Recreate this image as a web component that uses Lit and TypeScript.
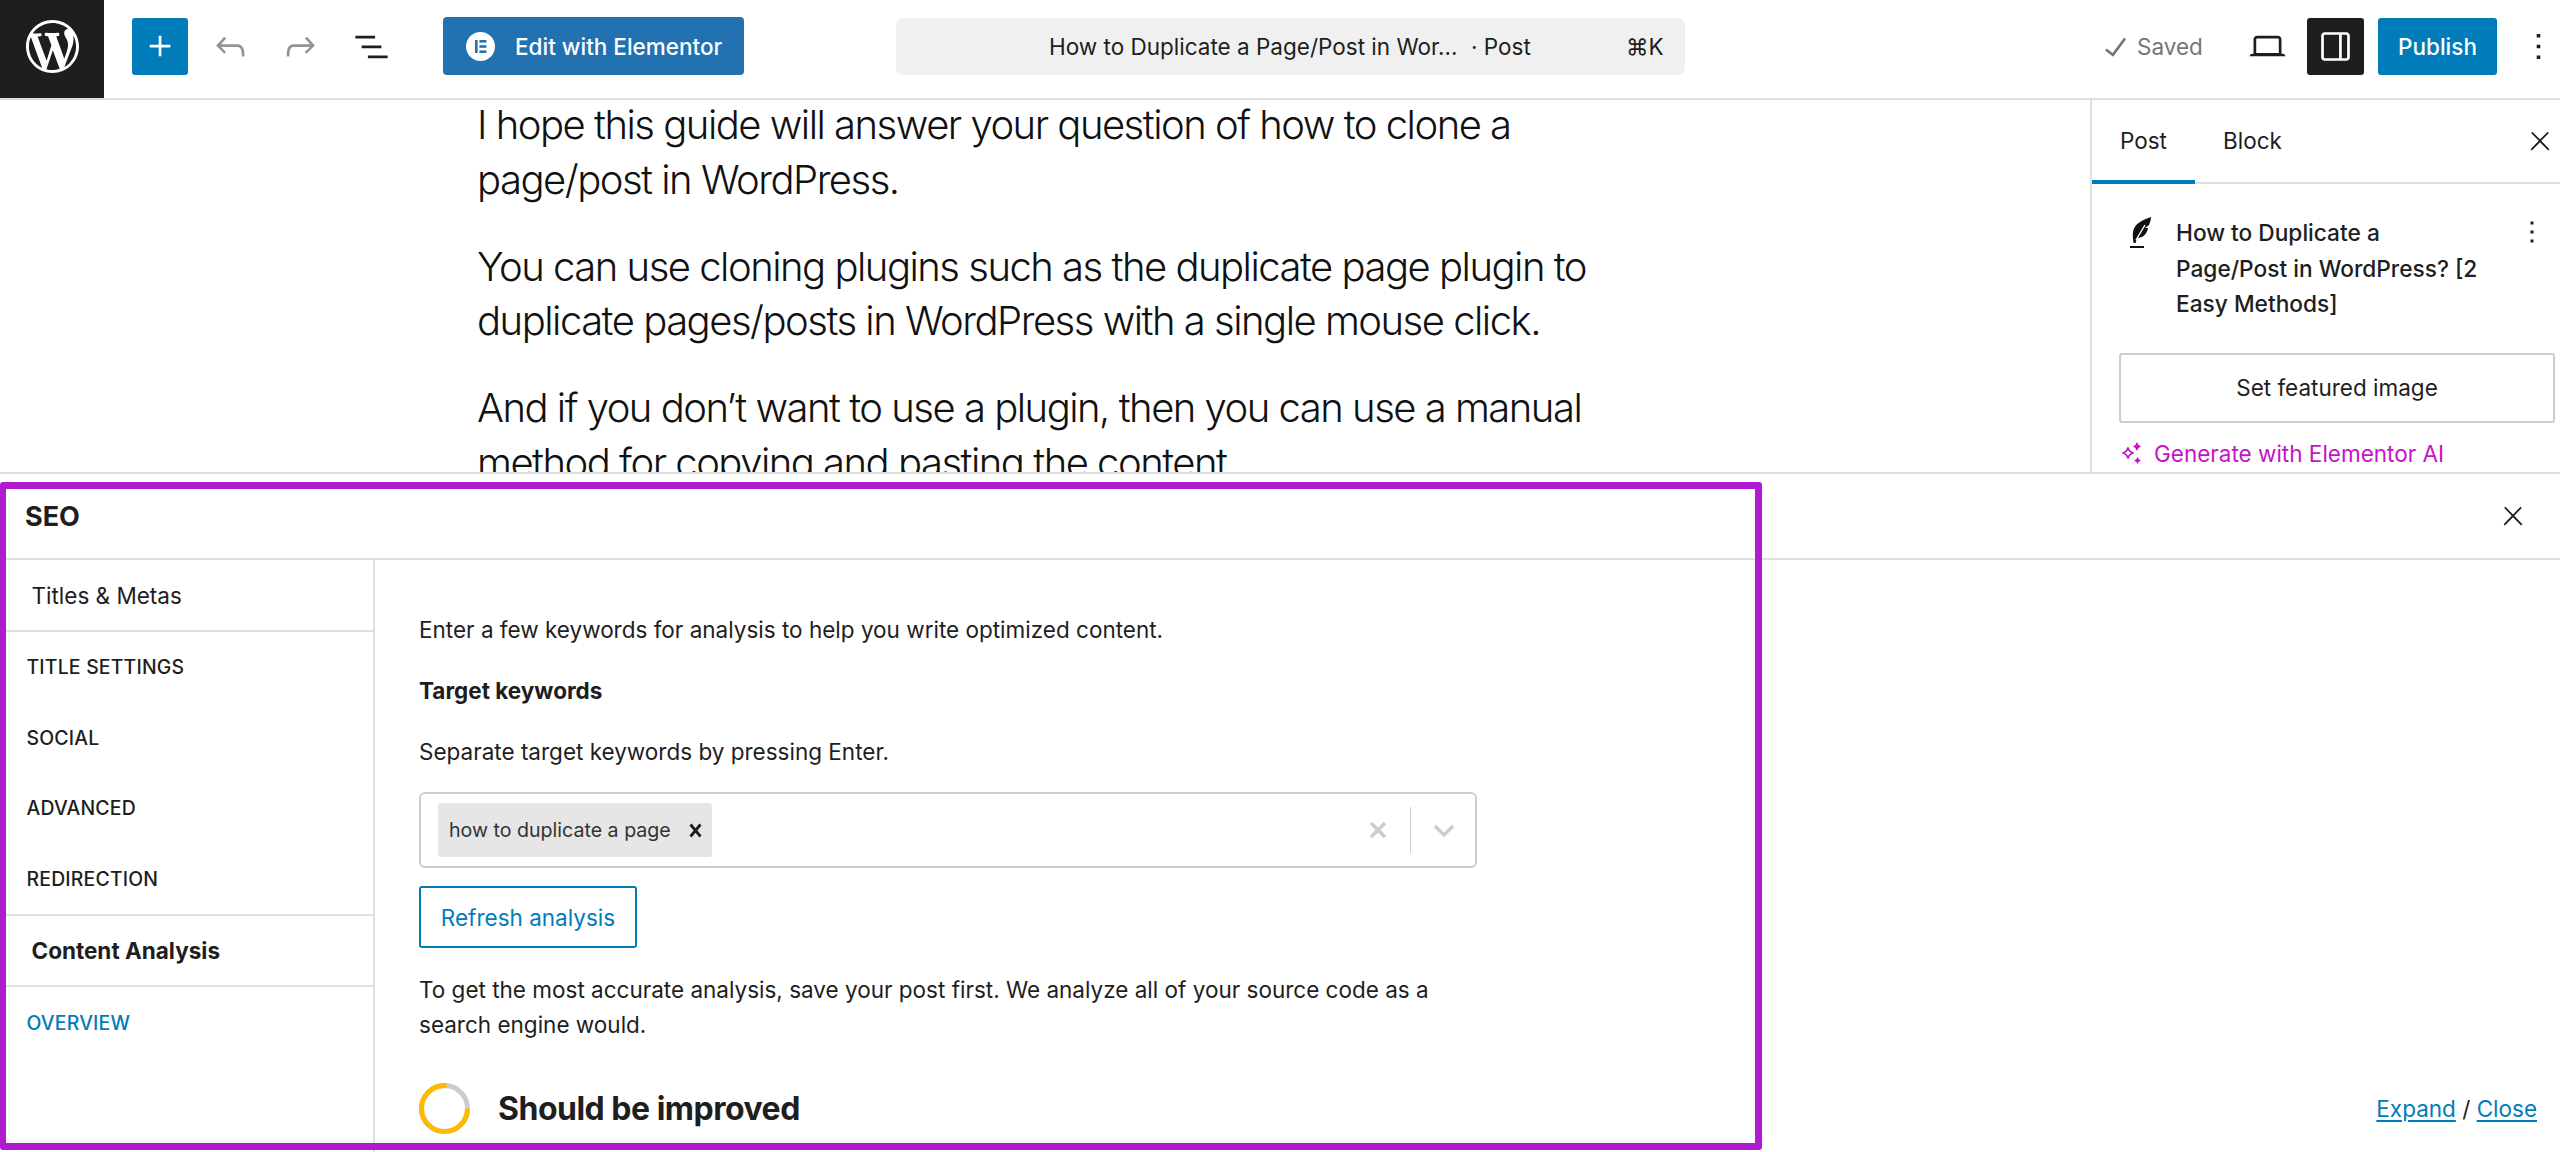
import { LitElement, html, css, svg } from "lit";
import { customElement } from "lit/decorators.js";

const icon = (d: string, size = 43) => html`<svg class="ic" width=${size} height=${size} viewBox="0 0 24 24" fill="currentColor">${svg`<path d=${d}></path>`}</svg>`;
const P = {
  plus: "M11 12.5V17.5H12.5V12.5H17.5V11H12.5V6H11V11H6V12.5H11Z",
  undo: "M18.3 11.7c-.6-.6-1.4-.9-2.3-.9H6.7l2.9-3.3-1.1-1-4.5 5L8.5 16l1-1-2.7-2.7H16c.5 0 .9.2 1.3.5 1 1 1 3.4 1 4.5v.3h1.5v-.2c0-1.5 0-4.3-1.5-5.7z",
  redo: "M15.6 6.5l-1.1 1 2.9 3.3H8c-.9 0-1.7.3-2.3.9-1.4 1.5-1.4 4.2-1.4 5.7v.2h1.5v-.3c0-1.1 0-3.5 1-4.5.3-.3.7-.5 1.3-.5h9.2L14.3 15l1.1 1.1 4.6-4.6-4.4-5z",
  list: "M3 6h11v1.5H3V6zm3.5 5.5h11V13h-11v-1.5zM21 17H10v1.5h11V17z",
  check: "M16.7 7.1l-6.3 8.5-3.3-2.5-.9 1.2 4.5 3.4L17.9 8z",
  laptop: "M20.5 16h-.7V8c0-1.1-.9-2-2-2H6.2c-1.1 0-2 .9-2 2v8h-.7c-.8 0-1.5.7-1.5 1.5h20c0-.8-.7-1.5-1.5-1.5zM5.7 8c0-.3.2-.5.5-.5h11.6c.3 0 .5.2.5.5v7.6H5.7V8z",
  drawer: "M18 4H6c-1.1 0-2 .9-2 2v12c0 1.1.9 2 2 2h12c1.1 0 2-.9 2-2V6c0-1.1-.9-2-2-2zm-4 14.5H6c-.3 0-.5-.2-.5-.5V6c0-.3.2-.5.5-.5h8v13zm4.5-.5c0 .3-.2.5-.5.5h-2.500v-13H18c.3 0 .5.2.5.5v12z",
  more: "M13 19h-2v-2h2v2zm0-6h-2v-2h2v2zm0-6h-2V5h2v2z",
  close: "M13 11.8l6.1-6.3-1-1-6.1 6.2-6.1-6.2-1 1 6.1 6.3-6.5 6.7 1 1 6.5-6.6 6.5 6.6 1-1z",
};

@customElement("app-root")
export class AppRoot extends LitElement {
  static styles = css`
    :host { display: block; position: relative; width: 2560px; height: 1152px; overflow: hidden; background: #fff; color: #1e1e1e; font-family: Inter, "Liberation Sans", sans-serif; font-size: 22.5px; }
    * { box-sizing: border-box; }
    .ic { display: block; flex: none; }
    .page { display: flex; flex-direction: column; height: 100%; }

    .top { display: grid; grid-template-columns: 896px 789px 1fr; align-items: center; height: 100px; flex: none; border-bottom: 2px solid #e0e0e0; }
    .left { display: flex; align-items: center; height: 98px; }
    .left > * { margin-bottom: 6px; }
    .left > .logo { margin-bottom: 0; padding-bottom: 6px; }
    .logo { width: 104px; height: 98px; background: #1e1e1e; color: #fff; display: flex; align-items: center; justify-content: center; }
    .add { width: 56px; height: 57px; margin-left: 28px; border-radius: 3px; background: #007cba; color: #fff; display: flex; align-items: center; justify-content: center; }
    .undo { margin-left: 21px; color: #949494; }
    .redo { margin-left: 27px; color: #949494; }
    .listv { margin-left: 28px; }
    .elem { display: flex; align-items: center; margin-left: 50px; width: 301px; height: 58px; background: #2271b1; border-radius: 4px; color: #fff; padding-left: 23px; gap: 20px; font-weight: 500; }
    .elem svg { flex: none; }
    .cmd { height: 57px; margin-bottom: 6px; border-radius: 7px; background: #f0f0f0; display: flex; align-items: center; padding-left: 153px; }
    .cmd .t { width: 405px; white-space: nowrap; }
    .cmd .k { margin-left: 17px; width: 155px; white-space: nowrap; }
    .saved { display: flex; align-items: center; color: #757575; margin-left: 420px; width: 141px; }
    .saved .ic { margin: 0 0 0 -11px; }
    .tog { width: 57px; height: 57px; margin-left: 18px; background: #1e1e1e; color: #fff; border-radius: 3px; display: flex; align-items: center; justify-content: center; }
    .pub { width: 119px; height: 57px; margin-left: 14px; background: #007cba; color: #fff; border-radius: 3px; display: flex; align-items: center; justify-content: center; font-weight: 500; }
    .dots { margin: 0 -1px 0 20px; }
    .rightwrap { display: flex; align-items: center; margin-bottom: 6px; }

    .upper { height: 372px; flex: none; display: flex; overflow: hidden; }
    .post { flex: 1; padding: 0 0 0 477px; overflow: hidden; font-size: 40px; font-weight: 300; line-height: 54.5px; letter-spacing: -1.5px; color: #111; }
    .post p { margin: -2px 0 32.5px; width: 1120px; white-space: nowrap; }
    .post p + p { margin-top: 0; }
    .side { width: 470px; flex: none; border-left: 2px solid #e0e0e0; }
    .tabs { display: flex; height: 84px; border-bottom: 2px solid #e0e0e0; align-items: center; position: relative; }
    .tab { height: 84px; display: flex; align-items: center; }
    .tab.on { width: 103px; padding-left: 28px; border-bottom: 4px solid #007cba; margin-bottom: -2px; }
    .tab.off { margin-left: 28px; padding-bottom: 2px; }
    .tabs .ic { margin-left: auto; margin-right: 5px; }
    .sum { display: flex; padding: 31px 0 0 38px; position: relative; }
    .sum .tt { margin-left: 24px; width: 310px; line-height: 35.6px; font-weight: 500; font-size: 22.7px; }
    .sum .feather { margin-top: 2px; flex: none; }
    .sum .ic { margin: -1px 0 0 28px; }
    .feat { margin: 31px 5px 0 27px; height: 70px; border: 2px solid #ccc; border-radius: 3px; display: flex; align-items: center; justify-content: center; }
    .gen { display: flex; align-items: center; gap: 12px; margin: 17px 0 0 28px; color: #c513c5; }

    .panel { flex: 1; display: flex; flex-direction: column; min-height: 0; border-top: 2px solid #e0e0e0; }
    .phead { height: 86px; flex: none; border-bottom: 2px solid #e0e0e0; display: flex; align-items: center; justify-content: space-between; padding: 0 32px 0 25px; font-size: 27px; font-weight: 700; }
    .pbody { flex: 1; display: flex; min-height: 0; }
    .nav { width: 375px; flex: none; border-right: 2px solid #e0e0e0; }
    .nh { height: 72px; display: flex; align-items: center; padding-left: 31.5px; border-bottom: 2px solid #e0e0e0; }
    .nh.b { font-weight: 700; border-top: 2px solid #e0e0e0; height: 73px; }
    .ni { height: 70.5px; display: flex; align-items: center; padding-left: 26.5px; font-size: 19.4px; font-weight: 500; letter-spacing: 0.2px; }
    .ni.on { color: #007cba; height: 72px; }
    .main { flex: 1; padding: 52px 0 0 44px; }
    .main p { margin: 0 0 26px; line-height: 35px; width: 1060px; }
    .main p.b { font-weight: 700; }
    .sel { width: 1058px; height: 76px; margin-top: -3px; border: 2px solid #ccc; border-radius: 6px; display: flex; align-items: center; padding-left: 17px; }
    .tag { height: 54px; width: 274px; flex: none; background: #e6e6e6; border-radius: 3px; display: flex; align-items: center; padding-left: 11px; font-size: 19.6px; color: #333; white-space: nowrap; }
    .tag svg { margin-left: 18px; flex: none; }
    .clr { margin-left: auto; }
    .div { width: 1.5px; height: 46px; background: #ccc; margin: 0 22px 0 23px; }
    .sel .chev { margin-right: 20px; }
    .ref { width: 218px; height: 62px; margin-top: 18px; border: 2px solid #007cba; border-radius: 3px; color: #007cba; display: flex; align-items: center; justify-content: center; }
    .main p.note { margin: 23.5px 0 41.5px; }
    .score { display: flex; align-items: center; gap: 28px; font-size: 32px; font-weight: 700; letter-spacing: -0.5px; }
    .links { align-self: flex-end; padding: 0 23px 28px 0; white-space: nowrap; line-height: 30px; }
    .links a { color: #007cba; text-decoration: underline; text-underline-offset: 3px; }

    .mark { position: absolute; left: 0; top: 482px; width: 1762px; height: 668px; border: 7px solid #ae1bd1; border-left-width: 6px; border-radius: 3px; pointer-events: none; }
  `;

  render() {
    return html`
      <div class="page">
        <header class="top">
          <div class="left">
            <div class="logo"><svg width="53" height="53" viewBox="0 0 20 20" fill="currentColor"><path d="M20 10c0-5.51-4.49-10-10-10C4.48 0 0 4.49 0 10c0 5.52 4.48 10 10 10 5.51 0 10-4.48 10-10zM7.78 15.37L4.37 6.22c.55-.02 1.17-.08 1.17-.08.5-.06.44-1.13-.06-1.11 0 0-1.45.11-2.37.11-.18 0-.37 0-.58-.01C4.12 2.69 6.87 1.11 10 1.11c2.33 0 4.45.87 6.05 2.34-.68-.11-1.65.39-1.65 1.58 0 .74.45 1.36.9 2.1.35.61.55 1.36.55 2.46 0 1.49-1.4 5-1.4 5l-3.03-8.37c.54-.02.82-.17.82-.17.5-.05.44-1.25-.06-1.22 0 0-1.44.12-2.38.12-.87 0-2.33-.12-2.33-.12-.5-.03-.56 1.2-.06 1.22l.92.08 1.26 3.41zM17.41 10c.24-.64.74-1.87.43-4.25.7 1.29 1.05 2.71 1.05 4.25 0 3.29-1.73 6.24-4.4 7.78.97-2.59 1.94-5.2 2.92-7.78zM6.1 18.09C3.12 16.65 1.11 13.53 1.11 10c0-1.3.23-2.48.72-3.59C3.25 10.3 4.67 14.2 6.1 18.09zm4.03-6.63l2.58 6.98c-.86.29-1.76.45-2.71.45-.79 0-1.57-.11-2.29-.33.81-2.38 1.62-4.74 2.42-7.1z"></path></svg></div>
            <div class="add">${icon(P.plus)}</div>
            <div class="undo">${icon(P.undo)}</div>
            <div class="redo">${icon(P.redo)}</div>
            <div class="listv">${icon(P.list)}</div>
            <div class="elem">
              <svg width="29" height="29" viewBox="0 0 29 29"><circle cx="14.5" cy="14.5" r="14.5" fill="#fff"></circle><g fill="#2271b1"><rect x="9" y="8" width="2.6" height="13"></rect><rect x="13.4" y="8" width="7" height="2.6"></rect><rect x="13.4" y="13.2" width="7" height="2.6"></rect><rect x="13.4" y="18.4" width="7" height="2.6"></rect></g></svg>
              <span>Edit with Elementor</span>
            </div>
          </div>
          <div class="cmd"><span class="t">How to Duplicate a Page/Post in Wor...</span><span class="k">· Post</span><span>⌘K</span></div>
          <div class="rightwrap">
            <div class="saved">${icon(P.check)}<span>Saved</span></div>
            <div>${icon(P.laptop)}</div>
            <div class="tog">${icon(P.drawer)}</div>
            <div class="pub">Publish</div>
            <div class="dots">${icon(P.more)}</div>
          </div>
        </header>

        <div class="upper">
          <div class="post">
            <p>I hope this guide will answer your question of how to clone a<br>page/post in WordPress.</p>
            <p>You can use cloning plugins such as the duplicate page plugin to<br>duplicate pages/posts in WordPress with a single mouse click.</p>
            <p>And if you don’t want to use a plugin, then you can use a manual<br>method for copying and pasting the content</p>
          </div>
          <aside class="side">
            <div class="tabs">
              <div class="tab on">Post</div>
              <div class="tab off">Block</div>
              ${icon(P.close, 30)}
            </div>
            <div class="sum">
              <svg class="feather" width="22" height="32" viewBox="0 0 22 32"><path d="M21 0C12 3 4 7 3 15c-.4 4 0 7 .5 11h2L7 21c6 0 10-4 11-10l-3 0 4-3c1-3 2-5 2-8z" fill="#111"></path><path d="M6 23L15 8" stroke="#fff" stroke-width="1.4" fill="none"></path><rect x="0" y="29" width="14" height="2" fill="#111"></rect></svg>
              <div class="tt">How to Duplicate a Page/Post in WordPress? [2 Easy Methods]</div>
              ${icon(P.more, 36)}
            </div>
            <div class="feat">Set featured image</div>
            <div class="gen">
              <svg width="22" height="22" viewBox="0 0 22 22"><path d="M8 5.500C8.700 9 10 10.300 13.500 11 10 11.700 8.700 13 8 16.500 7.300 13 6 11.700 2.500 11 6 10.300 7.300 9 8 5.500z" fill="none" stroke="#c513c5" stroke-width="1.6"></path><path d="M17 0l1.600 2.900L21 4.500l-2.400 1.600L17 9l-1.600-2.900L13 4.500l2.400-1.600zM17.500 15l1.300 2.200 2.200 1.300-2.200 1.300-1.300 2.200-1.300-2.200-2.200-1.300 2.200-1.300z" fill="#c513c5"></path></svg>
              <span>Generate with Elementor AI</span>
            </div>
          </aside>
        </div>

        <section class="panel">
          <div class="phead"><span>SEO</span>${icon(P.close, 30)}</div>
          <div class="pbody">
            <nav class="nav">
              <div class="nh">Titles &amp; Metas</div>
              <div class="ni">TITLE SETTINGS</div>
              <div class="ni">SOCIAL</div>
              <div class="ni">ADVANCED</div>
              <div class="ni">REDIRECTION</div>
              <div class="nh b">Content Analysis</div>
              <div class="ni on">OVERVIEW</div>
            </nav>
            <div class="main">
              <p>Enter a few keywords for analysis to help you write optimized content.</p>
              <p class="b">Target keywords</p>
              <p>Separate target keywords by pressing Enter.</p>
              <div class="sel">
                <div class="tag"><span>how to duplicate a page</span>
                  <svg width="13" height="15" viewBox="0 0 13 15"><path d="M1.500 1.500l10 12M11.500 1.500l-10 12" stroke="#1e1e1e" stroke-width="2.800"></path></svg>
                </div>
                <svg class="clr" width="18" height="18" viewBox="0 0 18 18"><path d="M2 2l14 14M16 2L2 16" stroke="#ccc" stroke-width="3.600"></path></svg>
                <div class="div"></div>
                <svg class="chev" width="22" height="13" viewBox="0 0 22 13"><path d="M2 2l9 9 9-9" fill="none" stroke="#ccc" stroke-width="3.200"></path></svg>
              </div>
              <div class="ref">Refresh analysis</div>
              <p class="note">To get the most accurate analysis, save your post first. We analyze all of your source code as a search engine would.</p>
              <div class="score">
                <svg width="51" height="51" viewBox="0 0 51 51"><circle cx="25.500" cy="25.500" r="23" fill="none" stroke="#ccc" stroke-width="5"></circle><circle cx="25.500" cy="25.500" r="23" fill="none" stroke="#ffb900" stroke-width="5" stroke-dasharray="110 144.500"></circle></svg>
                <span>Should be improved</span>
              </div>
            </div>
            <div class="links"><a>Expand</a> / <a>Close</a></div>
          </div>
        </section>
      </div>
      <div class="mark"></div>
    `;
  }
}
